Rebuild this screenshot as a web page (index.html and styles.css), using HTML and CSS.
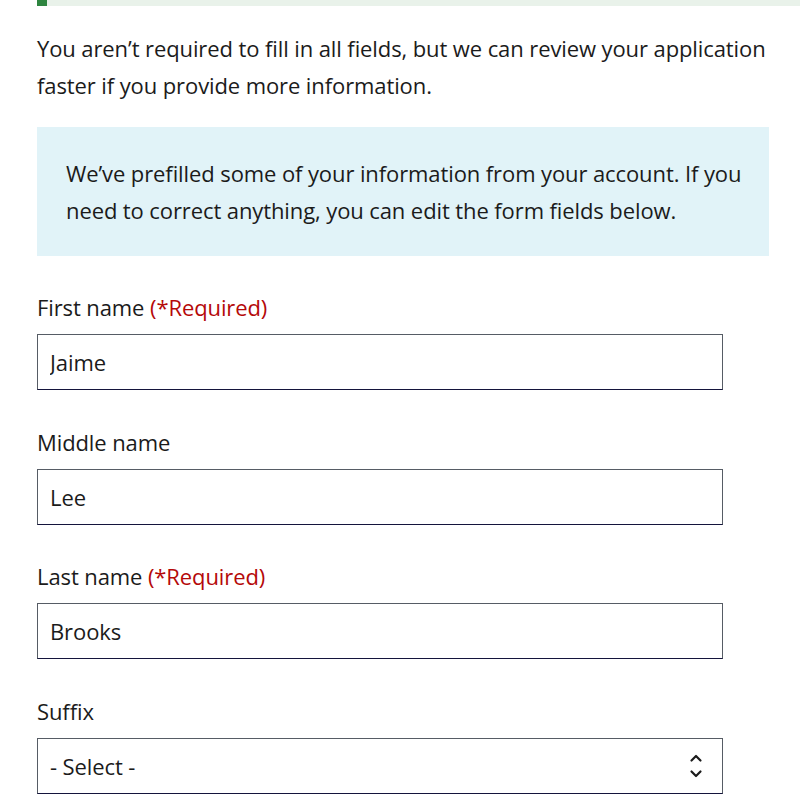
FILE: index.html
```html
<!DOCTYPE html>
<html lang="en">
<head>
<meta charset="utf-8">
<title>Applicant information</title>
<link rel="stylesheet" href="styles.css">
</head>
<body>
<div class="progress"><div class="progress-done"></div><div class="progress-rest"></div></div>
<main class="page">
  <p class="intro">You aren’t required to fill in all fields, but we can review your application faster if you provide more information.</p>
  <div class="info-box">
    <p>We’ve prefilled some of your information from your account. If you need to correct anything, you can edit the form fields below.</p>
  </div>
  <form class="form">
    <div class="field">
      <label class="label" for="first">First name <span class="req">(*Required)</span></label>
      <input class="input" id="first" type="text" value="Jaime">
    </div>
    <div class="field">
      <label class="label" for="middle">Middle name</label>
      <input class="input" id="middle" type="text" value="Lee">
    </div>
    <div class="field">
      <label class="label" for="last">Last name <span class="req">(*Required)</span></label>
      <input class="input" id="last" type="text" value="Brooks">
    </div>
    <div class="field">
      <label class="label" for="suffix">Suffix</label>
      <div class="select">
        <span class="select-value">- Select -</span>
        <svg class="select-icon" width="14" height="26" viewBox="0 0 14 26" aria-hidden="true">
          <path d="M2.5 7.5 L7 3 L11.5 7.5" fill="none" stroke="#1b1b1b" stroke-width="2.2" stroke-linecap="round" stroke-linejoin="round"/>
          <path d="M2.5 18.5 L7 23 L11.5 18.5" fill="none" stroke="#1b1b1b" stroke-width="2.2" stroke-linecap="round" stroke-linejoin="round"/>
        </svg>
      </div>
    </div>
  </form>
</main>
</body>
</html>
```
FILE: styles.css
```css
* { box-sizing: border-box; }
html, body { margin: 0; padding: 0; background: #fff; }
body {
  font-family: "Open Sans", "Noto Sans", sans-serif;
  font-variant-ligatures: none;
  color: #1b1b1b;
  font-size: 22px;
  letter-spacing: -0.1px;
  overflow: hidden;
}
.progress {
  display: flex;
  height: 6px;
  padding-left: 37px;
}
.progress-done { width: 10px; background: #2e8540; }
.progress-rest { flex: 1; background: #e9f2ea; }
.page {
  width: 769px;
  padding-left: 37px;
}
.intro {
  margin: 24px 0 0;
  line-height: 37px;
}
.info-box {
  margin-top: 23px;
  background: #e1f3f8;
  padding: 28px 16px 27px 29px;
}
.info-box p { margin: 0; line-height: 37px; }
.form { display: flex; flex-direction: column; }
.field { margin-top: 37px; display: flex; flex-direction: column; }
.field + .field { margin-top: 37.67px; }
.label {
  display: block;
  line-height: 28px;
  margin-bottom: 13px;
}
.req { color: #b50909; }
.input, .select {
  width: 686px;
  height: 56px;
  border: 1px solid #565c65;
  border-bottom-color: #14143c;
  font: inherit;
  letter-spacing: inherit;
  color: #1b1b1b;
  padding: 0 12px;
  margin: 0;
  background: #fff;
  border-radius: 0;
}
.select {
  display: flex;
  align-items: center;
  justify-content: space-between;
  padding-right: 19px;
}
.select-icon { display: block; }
```
